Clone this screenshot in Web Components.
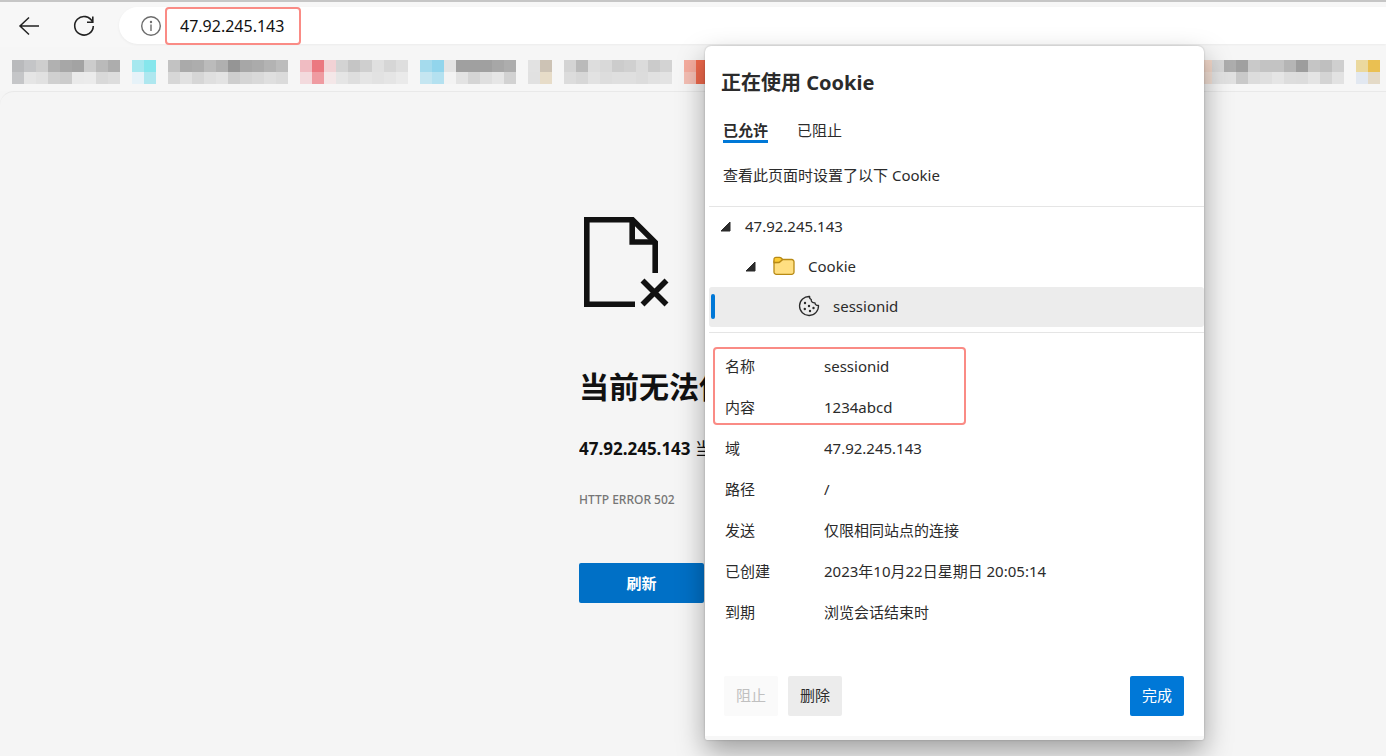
<!DOCTYPE html>
<html lang="zh-CN">
<head>
<meta charset="utf-8">
<title>47.92.245.143</title>
<style>
  html, body { height: 100%; margin: 0; }
  body {
    position: relative;
    overflow: hidden;
    background: #f5f5f5;
    color: #2b2b2b;
    font: 15px/20px "Noto Sans", "Noto Sans CJK SC", sans-serif;
  }
</style>
</head>
<body>
<browser-window></browser-window>

<script>
const define = (name, html, setup) => {
  customElements.define(name, class extends HTMLElement {
    constructor() {
      super();
      this.attachShadow({ mode: "open" }).innerHTML = html;
    }
    connectedCallback() { if (setup) setup(this, this.shadowRoot); }
  });
};

define("browser-toolbar", `
  <style>
    :host { display: flex; align-items: center; height: 37px; padding: 5px 0 3px 16px; border-top: 2px solid #c6c6c6; background: #f7f7f7; }
    button { display: flex; padding: 0; border: 0; background: none; margin-right: 30px; }
    .address { display: flex; align-items: center; flex: 1; height: 37px; margin-left: -8px; padding-left: 21px; border-radius: 19px 0 0 19px; background: #fff; box-shadow: 0 1px 3px #0000000d; }
    .address svg { margin-right: 3px; }
    input { box-sizing: border-box; width: 136px; height: 38px; padding: 0 0 0 13px; border: 2px solid #fa8b85; border-radius: 4px; background: #fff; color: #111; font: 16px/24px "Noto Sans", sans-serif; outline: 0; }
  </style>
  <button aria-label="返回"><svg width="25" height="24" viewBox="0 0 25 24" fill="none" stroke="#222" stroke-width="1.5"><path d="M23 12H3.5M13 3.500 4 12l9 8.500"/></svg></button>
  <button aria-label="刷新"><svg width="26" height="26" viewBox="0 0 26 26" fill="none" stroke="#222" stroke-width="1.6"><path d="M21.500 9A9.300 9.300 0 1 0 22.300 13"/><path d="M21.800 3.500V9.300H16"/></svg></button>
  <div class="address">
    <svg width="22" height="22" viewBox="0 0 22 22" fill="none" stroke="#6c6c6c" stroke-width="1.4"><circle cx="11" cy="11" r="9.300"/><path d="M11 9.500V16"/><circle cx="11" cy="7" r=".5" fill="#6c6c6c"/></svg>
    <input aria-label="地址" value="47.92.245.143">
  </div>`);

/* A bookmark is a two-row strip of swatches: "top colours|bottom colours". */
define("book-mark", `
  <style>
    :host { display: grid; grid-auto-flow: row; grid-auto-rows: 12px; flex: none; }
    i { display: block; }
  </style>`, (host, root) => {
  const rows = host.getAttribute("swatches").split("|").map(r => r.split(" "));
  host.style.gridTemplateColumns = `repeat(${rows[0].length}, 12px)`;
  for (const colour of rows.flat()) {
    const cell = document.createElement("i");
    cell.style.background = "#" + colour;
    root.append(cell);
  }
});

define("bookmark-bar", `
  <style>
    :host { display: flex; gap: 12px; padding: 13px 6px 7px 12px; background: #f6f6f6; overflow: hidden; }
    .end { margin-left: auto; }
  </style>
  <book-mark swatches="b9babc c4c5c7 cecece b1b1b1 a7a7a7 a3a3a3 cccccc bababa adadad|c5c6c8 e5e5e5 e1e1e1 d0d0d0 cccccc eaeaea ebebeb d9d9d9 dddddd"></book-mark>
  <book-mark swatches="a6e8ef 86e6ec|e6f2f8 aee7ef"></book-mark>
  <book-mark swatches="c2c2c2 aaaaaa adadad bbbbbb b0b0b0 959595 a7a7a7 ababab b3b3b3 bcbcbc|d7d7d7 e1e1e1 d6d6d6 dfdfdf e3e3e3 cecece d5d5d5 d9d9d9 dfdfdf dbdbdb"></book-mark>
  <book-mark swatches="f0bcc2 eb7880 f2d2d5 d3d3d3 c5c5c5 cfcfcf e0e0e0 d6d6d6 dedede|f3dadd ef9ba1 f4e7e8 e5e5e5 dedede e5e5e5 e2e2e2 e5e5e5 eaeaea"></book-mark>
  <book-mark swatches="a5dbed 92d5ec e4e4e4 a0a0a0 a0a0a0 a0a0a0 a7a7a7 adadad|c5e6f1 b4e1f0 f3f3f3 e3e3e3 d5d5d5 dfdfdf e6e6e6 d2d2d2"></book-mark>
  <book-mark swatches="e2e2e2 cdc3b5|e1e1e1 e7dcc8"></book-mark>
  <book-mark swatches="d4d4d4 bababa dddddd d9d9d9 cccccc d0d0d0 dbdbdb cbcbcb d3d3d3|dcdcdc d7d7d7 e2e2e2 dddddd dfdfdf dfdfdf dcdcdc e1e1e1 e3e3e3"></book-mark>
  <book-mark swatches="f5ac9e f0694c|f4beb3 f0694c"></book-mark>
  <book-mark class="end" swatches="f0d6c8 d8d8d8 adadad a0a0a0 c9c9c9 c3c3c3 c3c3c3 b5b5b5 9d9d9d c5c5c5 bfbfbf cfcfcf|f2dfd4 e3e3e3 e1e1e1 c9c9c9 dcdcdc dfdfdf e5e5e5 dddddd dcdcdc e4e4e4 d4d4d4 e2e2e2"></book-mark>
  <book-mark swatches="ebd99f eac052|e2e8f1 e4dac7"></book-mark>`);

define("error-page", `
  <style>
    :host { display: block; flex: 1; padding: 124px 0 0 calc(50% - 114px); border-top: 1px solid #e9e9e9; border-radius: 14px 0 0 0; color: #111; white-space: nowrap; }
    svg { display: block; margin: 0 0 59px 5px; }
    h1 { margin: 0 0 30px; font-size: 30px; line-height: 40px; }
    p { margin: 0 0 29px; font-size: 17px; line-height: 24px; }
    h1, p { width: 126px; overflow: hidden; }
    small { display: block; margin-bottom: 53px; font-size: 12px; font-weight: 500; color: #767676; }
    button { width: 125px; height: 40px; padding: 0; border: 0; border-radius: 2px; background: #0070c6; color: #fff; font: bold 15px/20px "Noto Sans", "Noto Sans CJK SC", sans-serif; }
  </style>
  <svg width="86" height="92" viewBox="0 0 86 92" fill="none" stroke="#111" stroke-width="5.600"><path d="M51 88.200H2.800V3.800H48.500L71.200 26.500V57"/><path d="M48.200 3.800V26H71.200"/><path d="M58.500 64.500 82.500 88.500M82.500 64.500 58.500 88.500"/></svg>
  <h1>当前无法使</h1>
  <p><b>47.92.245.143</b> 当</p>
  <small>HTTP ERROR 502</small>
  <button>刷新</button>`);

define("tree-row", `
  <style>
    :host { display: flex; align-items: center; box-sizing: border-box; height: 40px; padding: 0 0 2px 11px; border-radius: 3px; }
    :host([level="2"]) { padding-left: 36px; }
    :host([level="3"]) { padding-left: 0; background: #ececec; }
    :host([level="3"]) .caret { display: none; }
    .mark { display: none; width: 4px; height: 25px; margin: 0 83px 0 2px; border-radius: 2px; background: #0078d7; }
    :host([level="3"]) .mark { display: block; }
    .caret { margin-right: 14px; }
    ::slotted(svg) { margin: 0 13px 0 0; }
    :host([level="2"]) ::slotted(svg) { margin-left: 3px; }
  </style>
  <span class="mark"></span>
  <svg class="caret" width="11" height="11" viewBox="0 0 11 11"><path d="M10 1V10H1Z" fill="#2b2b2b" stroke="#2b2b2b" stroke-linejoin="round"/></svg>
  <slot></slot>`);

define("cookie-tree", `
  <style>
    :host { display: block; margin-left: 4px; padding-bottom: 5px; border: solid #e5e5e5; border-width: 1px 0; }
  </style>
  <tree-row level="1">47.92.245.143</tree-row>
  <tree-row level="2">
    <svg width="22" height="20" viewBox="0 0 22 20" stroke="#b88a14" stroke-width="1.300"><path d="M1 4.500V16a2.300 2.300 0 0 0 2.300 2.300H18.700A2.300 2.300 0 0 0 21 16V5.800a2.300 2.300 0 0 0-2.300-2.300H9.500L6 6.500H1Z" fill="#ffdf81"/><path d="M1 6.500V3.300A2 2 0 0 1 3 1.300H6.500Q7.500 1.300 8.200 2L9.600 3.500 7 5.800Q6.300 6.400 5.500 6.400Z" fill="#fdcb33"/></svg>
    Cookie
  </tree-row>
  <tree-row level="3">
    <svg width="22" height="22" viewBox="0 0 22 22" fill="none" stroke="#2b2b2b" stroke-width="1.300"><path d="M11.600 1.500A9.500 9.500 0 1 0 20.500 10.300C18.800 10.700 17 9.700 17 7.900 14.500 8 12.800 6.700 13.300 4.500 12 4 11.400 2.800 11.600 1.500Z" stroke-linejoin="round"/><g fill="#2b2b2b" stroke="none"><circle cx="7" cy="8" r="1.200"/><circle cx="11" cy="11" r="1.200"/><circle cx="6.800" cy="14" r="1.200"/><circle cx="12" cy="16" r="1.200"/><circle cx="15.500" cy="13" r="1.200"/></g></svg>
    sessionid
  </tree-row>`);

define("cookie-details", `
  <style>
    :host { display: block; position: relative; padding: 12px 20px 44px; }
    table { border-collapse: collapse; width: 100%; }
    th { width: 99px; font-weight: normal; text-align: left; }
    th, td { height: 41px; padding: 0; }
    .highlight { position: absolute; top: 14px; left: 8px; box-sizing: border-box; width: 253px; height: 78px; border: 2px solid #fa8b85; border-radius: 4px; }
  </style>
  <table>
    <tr><th scope="row">名称</th><td>sessionid</td></tr>
    <tr><th scope="row">内容</th><td>1234abcd</td></tr>
    <tr><th scope="row">域</th><td>47.92.245.143</td></tr>
    <tr><th scope="row">路径</th><td>/</td></tr>
    <tr><th scope="row">发送</th><td>仅限相同站点的连接</td></tr>
    <tr><th scope="row">已创建</th><td>2023年10月22日星期日 20:05:14</td></tr>
    <tr><th scope="row">到期</th><td>浏览会话结束时</td></tr>
  </table>
  <div class="highlight"></div>`);

define("cookie-dialog", `
  <style>
    :host { display: block; position: absolute; top: 46px; right: 182px; width: 499px; box-sizing: border-box; padding-top: 23px; border-bottom: 4px solid #f7f7f7; border-radius: 6px 6px 2px 2px; background: #fff; box-shadow: 0 0 2px #00000040, 0 12px 28px #00000059; }
    h2 { margin: 0 0 23px; padding-left: 16px; font-size: 20px; line-height: 28px; }
    nav { display: flex; gap: 29px; padding-left: 18px; }
    button { padding: 0; border: 0; background: none; color: inherit; font: inherit; }
    nav button { height: 23px; border-bottom: 3px solid transparent; }
    nav .on { border-color: #0078d7; font-weight: bold; }
    p { margin: 22px 0 21px; padding-left: 18px; }
    footer { display: flex; gap: 10px; padding: 0 20px 20px 19px; }
    footer button { width: 54px; height: 40px; padding-bottom: 2px; border-radius: 2px; background: #ececec; }
    footer button:disabled { background: #fafafa; color: #c0c0c0; }
    footer .done { margin-left: auto; background: #0078d7; color: #fff; }
  </style>
  <h2>正在使用 Cookie</h2>
  <nav><button class="on">已允许</button><button>已阻止</button></nav>
  <p>查看此页面时设置了以下 Cookie</p>
  <cookie-tree></cookie-tree>
  <cookie-details></cookie-details>
  <footer><button disabled>阻止</button><button>删除</button><button class="done">完成</button></footer>`);

define("browser-window", `
  <style>
    :host { display: flex; flex-direction: column; min-height: 100%; }
  </style>
  <browser-toolbar></browser-toolbar>
  <bookmark-bar></bookmark-bar>
  <error-page></error-page>
  <cookie-dialog role="dialog" aria-label="正在使用 Cookie"></cookie-dialog>`);
</script>
</body>
</html>
